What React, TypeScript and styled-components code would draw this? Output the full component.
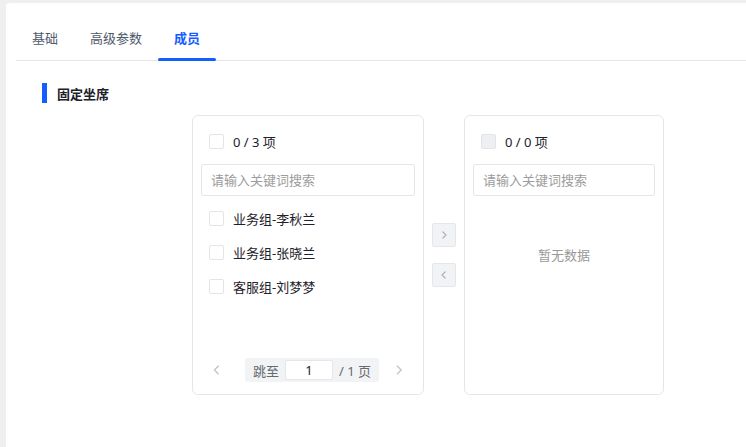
import React from "react";
import styled, { createGlobalStyle } from "styled-components";

const GlobalStyle = createGlobalStyle`
  html, body { margin: 0; padding: 0; background: #efefef; }
  body {
    font-family: "Noto Sans", "Noto Sans CJK SC", sans-serif;
    font-size: 13px;
    color: #1d2129;
  }
  * { box-sizing: border-box; }
`;

const Page = styled.div`
  padding: 3px 0 0 6px;
  height: 447px;
  overflow: hidden;
`;

const Card = styled.div`
  background: #fff;
  border-radius: 4px 0 0 0;
  height: 460px;
  padding: 16px 0 0 10px;
`;

const TabNav = styled.div`
  display: flex;
  border-bottom: 1px solid #e5e6eb;
`;

const Tab = styled.div<{ $active?: boolean }>`
  position: relative;
  height: 41px;
  padding: 0 16px 4px;
  display: flex;
  align-items: center;
  font-size: 13px;
  color: ${(p) => (p.$active ? "#165dff" : "#4e5969")};
  font-weight: ${(p) => (p.$active ? 600 : 400)};
`;

const Ink = styled.span`
  position: absolute;
  left: 0;
  right: 0;
  bottom: -1px;
  height: 3px;
  border-radius: 2px;
  background: #165dff;
`;

const Section = styled.div`
  padding: 22px 0 0 26px;
`;

const SectionTitle = styled.div`
  display: flex;
  align-items: center;
  height: 20px;
  gap: 10px;
  font-size: 13px;
  font-weight: 700;
  color: #1d2129;
`;

const TitleBar = styled.span`
  width: 5px;
  height: 20px;
  background: #165dff;
`;

const FormItem = styled.div`
  display: grid;
  grid-template-columns: 150px auto;
  margin-top: 12px;
`;

const Transfer = styled.div`
  display: flex;
  align-items: center;
  gap: 8px;
`;

const Panel = styled.div<{ $width: number }>`
  width: ${(p) => p.$width}px;
  height: 280px;
  border: 1px solid #e5e6eb;
  border-radius: 6px;
  padding: 0 8px;
  display: flex;
  flex-direction: column;
`;

const Header = styled.div`
  height: 48px;
  padding: 2px 0 0 8px;
  display: flex;
  align-items: center;
  gap: 9px;
  color: #1d2129;
`;

const Box = styled.span<{ $disabled?: boolean }>`
  width: 15px;
  height: 15px;
  border-radius: 2px;
  border: 1px solid #e3e4e8;
  background: ${(p) => (p.$disabled ? "#eeeff1" : "#fff")};
  flex: none;
`;

const Search = styled.input`
  height: 32px;
  width: 100%;
  border: 1px solid #e5e6eb;
  border-radius: 2px;
  padding: 0 9px;
  font: inherit;
  font-size: 13px;
  outline: none;
  &::placeholder { color: #9c9c9c; }
`;

const List = styled.div`
  flex: 1;
  margin-top: 5px;
`;

const Item = styled.div`
  height: 34px;
  display: flex;
  align-items: center;
  gap: 9px;
  padding-left: 8px;
  color: #1d2129;
`;

const Empty = styled.div`
  padding-top: 44px;
  line-height: 20px;
  text-align: center;
  color: #999999;
`;

const Pager = styled.div`
  height: 24px;
  margin-bottom: 12px;
  display: flex;
  align-items: center;
  justify-content: center;
`;

const PagerArrow = styled.span<{ $side: "prev" | "next" }>`
  width: 24px;
  height: 24px;
  display: flex;
  align-items: center;
  justify-content: center;
  color: #c0c4cc;
  margin-right: ${(p) => (p.$side === "prev" ? "16px" : "0")};
  margin-left: ${(p) => (p.$side === "next" ? "8px" : "0")};
`;

const Jumper = styled.div`
  height: 24px;
  width: 134px;
  background: #f2f3f5;
  border-radius: 2px;
  padding: 0 7px 0 8px;
  display: flex;
  align-items: center;
  gap: 6px;
  color: #666a70;
`;

const PageInput = styled.div`
  width: 48px;
  height: 20px;
  background: #fff;
  border: 1px solid #e5e6eb;
  border-radius: 2px;
  display: flex;
  align-items: center;
  justify-content: center;
  color: #1d2129;
`;

const Ops = styled.div`
  display: flex;
  flex-direction: column;
  gap: 16px;
`;

const OpButton = styled.span`
  width: 24px;
  height: 24px;
  border-radius: 2px;
  border: 1px solid #e5e6eb;
  background: #f2f3f5;
  color: #a9aeb8;
  display: flex;
  align-items: center;
  justify-content: center;
`;

const Chevron = ({ dir, size = 10 }: { dir: "left" | "right"; size?: number }) => (
  <svg width={size * 0.8} height={size} viewBox="0 0 8 10" fill="none">
    <path
      d={dir === "right" ? "M2.5 1.5 L6 5 L2.5 8.5" : "M5.5 1.5 L2 5 L5.5 8.5"}
      stroke="currentColor"
      strokeWidth="1.1"
    />
  </svg>
);

const items = ["业务组-李秋兰", "业务组-张晓兰", "客服组-刘梦梦"];

export default function App() {
  return (
    <>
      <GlobalStyle />
      <Page>
        <Card>
          <TabNav>
            <Tab>基础</Tab>
            <Tab>高级参数</Tab>
            <Tab $active>
              成员
              <Ink />
            </Tab>
          </TabNav>
          <Section>
            <SectionTitle>
              <TitleBar />
              固定坐席
            </SectionTitle>
            <FormItem>
              <div />
              <Transfer>
                <Panel $width={232}>
                  <Header>
                    <Box />
                    <span>0 / 3 项</span>
                  </Header>
                  <Search placeholder="请输入关键词搜索" />
                  <List>
                    {items.map((t) => (
                      <Item key={t}>
                        <Box />
                        <span>{t}</span>
                      </Item>
                    ))}
                  </List>
                  <Pager>
                    <PagerArrow $side="prev">
                      <Chevron dir="left" size={12} />
                    </PagerArrow>
                    <Jumper>
                      <span>跳至</span>
                      <PageInput>1</PageInput>
                      <span>/ 1 页</span>
                    </Jumper>
                    <PagerArrow $side="next">
                      <Chevron dir="right" size={12} />
                    </PagerArrow>
                  </Pager>
                </Panel>
                <Ops>
                  <OpButton>
                    <Chevron dir="right" />
                  </OpButton>
                  <OpButton>
                    <Chevron dir="left" />
                  </OpButton>
                </Ops>
                <Panel $width={200}>
                  <Header>
                    <Box $disabled />
                    <span>0 / 0 项</span>
                  </Header>
                  <Search placeholder="请输入关键词搜索" />
                  <List>
                    <Empty>暂无数据</Empty>
                  </List>
                </Panel>
              </Transfer>
            </FormItem>
          </Section>
        </Card>
      </Page>
    </>
  );
}
